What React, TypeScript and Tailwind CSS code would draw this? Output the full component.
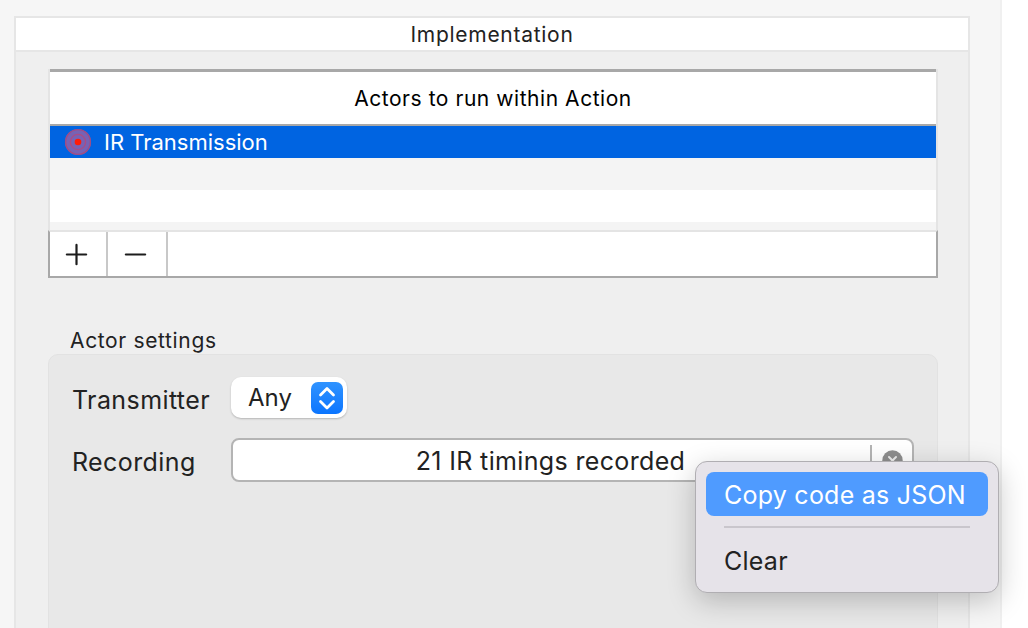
import React from "react";
import { Plus, Minus } from "lucide-react";

const font = "[font-family:Inter,'Liberation_Sans',sans-serif]";

const ActorIcon = () => (
  <svg width="28" height="28" viewBox="0 0 28 28" className="shrink-0">
    <circle cx="14" cy="14" r="13" fill="#7762b4" />
    <circle cx="14" cy="14" r="12.4" fill="none" stroke="#a04c84" strokeWidth="1.4" />
    <circle cx="14" cy="14" r="7.6" fill="none" stroke="#aa4c86" strokeWidth="1.4" />
    <circle cx="14" cy="14" r="3.3" fill="#ff1c08" />
  </svg>
);

const Stepper = () => (
  <span className="flex h-8 w-8 items-center justify-center rounded-[7px] bg-gradient-to-b from-[#2f93ff] to-[#0a75ff]">
    <svg width="32" height="32" viewBox="0 0 32 32" fill="none" stroke="white" strokeWidth="2.8" strokeLinecap="round" strokeLinejoin="round">
      <path d="M9.5 13 16 6.5l6.5 6.5" />
      <path d="M9.5 19.5 16 26l6.5-6.5" />
    </svg>
  </span>
);

const ClearIcon = () => (
  <svg width="21" height="21" viewBox="0 0 21 21" fill="none">
    <circle cx="10.5" cy="10.5" r="10.2" fill="#8e8e8e" />
    <path d="M7 7l7 7M14 7l-7 7" stroke="#ececec" strokeWidth="2" strokeLinecap="round" />
  </svg>
);

export default function App() {
  return (
    <div className={`${font} relative flex h-[628px] w-[1028px] overflow-hidden bg-white text-[#222222]`}>
      <div className="h-full w-[1002px] shrink-0 border-r-2 border-[#f0f0f0] bg-[#f6f6f6] pl-[14px] pt-4">
        <div className="h-[640px] w-[956px] border-2 border-b-0 border-[#e6e6e6] bg-[#efefef]">
          <div className="flex h-[34px] items-center justify-center border-b-2 border-[#e6e6e6] bg-white pt-[2px] text-[21px] tracking-[0.72px]">
            Implementation
          </div>

          <div className="ml-8 mt-[17px] w-[890px] border-x-2 border-[#e4e4e4]">
            <div className="flex h-[57px] items-center justify-center border-y-[3px] border-b-2 border-t-[#a8a8a8] border-b-[#a8a8a8] bg-white pt-[2px] text-[21px] tracking-[0.55px] text-black">
              Actors to run within Action
            </div>
            <div className="flex h-8 items-center gap-3 bg-[#0064e1] pl-[14px] text-[22px] text-white">
              <ActorIcon />
              IR Transmission
            </div>
            <div className="h-8 bg-[#f4f4f4]" />
            <div className="h-8 bg-white" />
            <div className="h-2 bg-[#f4f4f4]" />
          </div>
          <div className="ml-8 flex h-12 w-[890px] border-2 border-[#a8a8a8] border-t-[#e4e4e4] bg-white text-[#1c1c1c]">
            <div className="flex w-[58px] items-center justify-center border-r-2 border-[#c8c8c8] pr-1">
              <Plus size={33} strokeWidth={1.6} />
            </div>
            <div className="flex w-[60px] items-center justify-center border-r-2 border-[#c8c8c8] pr-[3px]">
              <Minus size={33} strokeWidth={1.6} />
            </div>
          </div>

          <div className="ml-[54px] mt-[50px] h-[26px] text-[21px] leading-[26px] tracking-[0.65px]">Actor settings</div>
          <div className="ml-8 h-[300px] w-[890px] rounded-[10px] border border-[#e2e2e2] bg-[#e8e8e8] pl-[23px] pt-[22px]">
            <div className="flex items-center">
              <span className="w-[159px] pt-[6px] text-[25px] leading-none tracking-[0.4px]">Transmitter</span>
              <div className="flex h-[41px] w-[116px] items-center justify-between rounded-[10px] bg-white pl-[17px] pr-1 text-[24px] shadow-[0_1px_2px_rgba(0,0,0,0.22)]">
                Any
                <Stepper />
              </div>
            </div>
            <div className="mt-5 flex items-center">
              <span className="w-[159px] pt-1 text-[25px] leading-none tracking-[0.4px]">Recording</span>
              <div className="flex h-[44px] w-[683px] items-center rounded-lg border-2 border-[#b4b4b4] bg-white text-[25px] tracking-[0.35px]">
                <span className="flex-1 pr-[2px] pt-1 text-center">21 IR timings recorded</span>
                <span className="h-[30px] w-[2px] bg-[#b4b4b4]" />
                <span className="flex w-10 justify-center">
                  <ClearIcon />
                </span>
              </div>
            </div>
          </div>
        </div>
      </div>

      <div className="absolute left-[695px] top-[461px] h-[132px] w-[304px] rounded-xl border border-[#b0aeb2] bg-[#e6e3e9] px-[10px] pt-[10px] shadow-[0_8px_28px_rgba(0,0,0,0.22)]">
        <div className="flex h-11 items-center rounded-lg bg-[#4f9bff] pl-[18px] pt-1 text-[25px] tracking-[0.24px] text-white">
          Copy code as JSON
        </div>
        <div className="mx-[18px] mt-[10px] h-[2px] bg-[#c9c6cc]" />
        <div className="mt-[10px] flex h-11 items-center pl-[18px] pt-1 text-[25px] tracking-[0.24px]">Clear</div>
      </div>
    </div>
  );
}
